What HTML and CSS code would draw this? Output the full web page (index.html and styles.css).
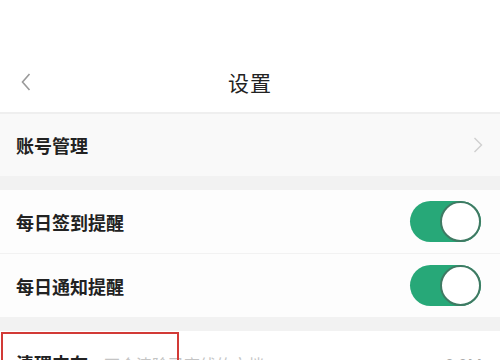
FILE: index.html
```html
<!DOCTYPE html>
<html lang="zh-CN">
<head>
<meta charset="utf-8">
<link rel="stylesheet" href="styles.css">
</head>
<body>
<div class="page">
  <div class="status"></div>
  <header class="nav">
    <span class="back">
      <svg width="10" height="18" viewBox="0 0 10 18"><path d="M8.5 1 L1.5 9 L8.5 17" fill="none" stroke="#9a9a9a" stroke-width="1.6"/></svg>
    </span>
    <h1 class="title">设置</h1>
  </header>
  <div class="row row-grey">
    <span class="label">账号管理</span>
    <svg class="chev" width="10" height="16" viewBox="0 0 10 16"><path d="M1.5 1 L8.5 8 L1.5 15" fill="none" stroke="#cfcfcf" stroke-width="1.4"/></svg>
  </div>
  <div class="gap"></div>
  <div class="row row-line">
    <span class="label">每日签到提醒</span>
    <span class="toggle"><span class="knob"></span></span>
  </div>
  <div class="row">
    <span class="label">每日通知提醒</span>
    <span class="toggle"><span class="knob"></span></span>
  </div>
  <div class="gap"></div>
  <div class="row row-clear">
    <span class="label">清理内存</span>
    <span class="hint">不会清除已离线的文档</span>
    <span class="size">0.0M</span>
    <span class="mark"></span>
  </div>
</div>
</body>
</html>
```
FILE: styles.css
```css
html, body {
  margin: 0;
  padding: 0;
  background: #ffffff;
}
.page {
  width: 500px;
  height: 360px;
  overflow: hidden;
  font-family: "Noto Sans CJK SC", "Noto Sans", sans-serif;
  color: #222;
}
.status {
  height: 52px;
}
.nav {
  height: 60px;
  display: flex;
  align-items: center;
  justify-content: center;
  position: relative;
  border-bottom: 2px solid #efefef;
}
.back {
  position: absolute;
  left: 21px;
  top: 21px;
  display: flex;
}
.title {
  margin: 0;
  font-size: 21px;
  font-weight: 400;
  color: #222;
  letter-spacing: 1px;
}
.row {
  height: 63px;
  display: flex;
  align-items: center;
  padding: 0 18px 0 16px;
  background: #fdfdfd;
  position: relative;
}
.row-grey {
  height: 62px;
  background: #f9f9f9;
}
.row-line {
  border-bottom: 1px solid #f2f2f2;
}
.label {
  font-size: 18px;
  font-weight: 700;
  color: #222;
}
.chev {
  margin-left: auto;
  margin-right: -1px;
}
.gap {
  height: 14px;
  background: #f2f2f2;
}
.toggle {
  margin-left: auto;
  width: 71px;
  height: 41px;
  border-radius: 21px;
  background: #27a878;
  display: flex;
  justify-content: flex-end;
  align-items: center;
  margin-right: 1px;
}
.knob {
  width: 37px;
  height: 37px;
  border-radius: 50%;
  background: #fff;
  border: 2px solid #3f7a63;
}
.row-clear {
  align-items: flex-end;
  padding-bottom: 0;
  height: 31px;
  background: #ffffff;
}
.row-clear .label,
.row-clear .hint,
.row-clear .size {
  transform: translateY(14px);
}
.hint {
  margin-left: 16px;
  font-size: 16px;
  color: #c4c4c4;
}
.size {
  margin-left: auto;
  font-size: 16px;
  color: #aaa;
  font-family: "Noto Sans", sans-serif;
}
.mark {
  position: absolute;
  left: 1px;
  top: 1px;
  width: 174px;
  height: 60px;
  border: 2px solid #d23a36;
}
```
